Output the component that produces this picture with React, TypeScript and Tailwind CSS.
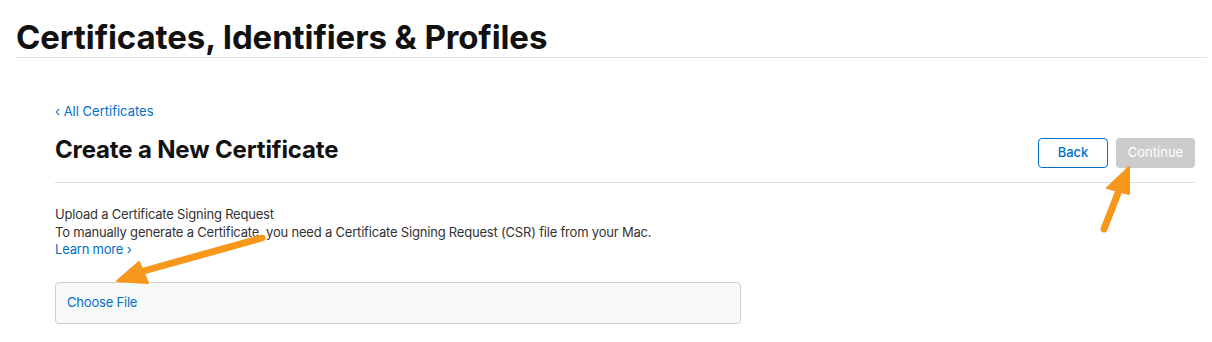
export default function App() {
  return (
    <div className="relative w-[1212px] h-[342px] bg-white overflow-hidden font-['Inter',sans-serif] text-[#111]">
      <div className="px-[16px] pr-[5px] pt-[17px]">
        <h1 className="text-[33px] leading-[40px] font-bold tracking-[-0.1px] text-[#111]">
          Certificates, Identifiers &amp; Profiles
        </h1>
        <div className="h-px bg-[#e0e0e0]" />
      </div>

      <div className="pl-[55px] pr-[17px] pt-[44px]">
        <a href="#" className="block text-[13px] leading-[18px] text-[#0070c9]">
          ‹ All Certificates
        </a>
        <div className="mt-[18px] flex items-center justify-between h-[30px]">
          <h2 className="pb-[6px] text-[24px] leading-[30px] font-bold tracking-[-0.15px] text-[#111]">Create a New Certificate</h2>
          <div className="flex gap-[8px]">
            <button className="h-[30px] w-[70px] rounded-[4px] border border-[#0070c9] text-[13px] font-medium text-[#0070c9] bg-white">
              Back
            </button>
            <button className="h-[30px] w-[79px] rounded-[4px] bg-[#cccccc] text-[13px] text-white">
              Continue
            </button>
          </div>
        </div>
        <div className="mt-[14px] h-px bg-[#dcdcdc]" />

        <div className="mt-[23px] text-[13px] leading-[17.5px] tracking-[-0.2px] text-[#333]">
          <p>Upload a Certificate Signing Request</p>
          <p>To manually generate a Certificate, you need a Certificate Signing Request (CSR) file from your Mac.</p>
          <a href="#" className="block text-[#0070c9]">
            Learn more ›
          </a>
        </div>

        <div className="mt-[23px] w-[686px] h-[42px] rounded-[4px] border border-[#cfcfcf] bg-[#f7f8f8] flex items-center px-[11px]">
          <span className="text-[13px] tracking-[-0.2px] text-[#0070c9]">Choose File</span>
        </div>
      </div>

      <svg className="absolute left-0 top-0 pointer-events-none" width="1212" height="342">
        <g fill="#f7971b" stroke="#f7971b" strokeLinecap="round" strokeLinejoin="round">
          <line x1="262" y1="238" x2="140" y2="272" strokeWidth="7" fill="none" />
          <polygon points="117,281 139,262 148,283" strokeWidth="2" />
          <line x1="1104" y1="229" x2="1120" y2="188" strokeWidth="7" fill="none" />
          <polygon points="1129,167 1107,188 1129,194" strokeWidth="2" />
        </g>
      </svg>
    </div>
  );
}
